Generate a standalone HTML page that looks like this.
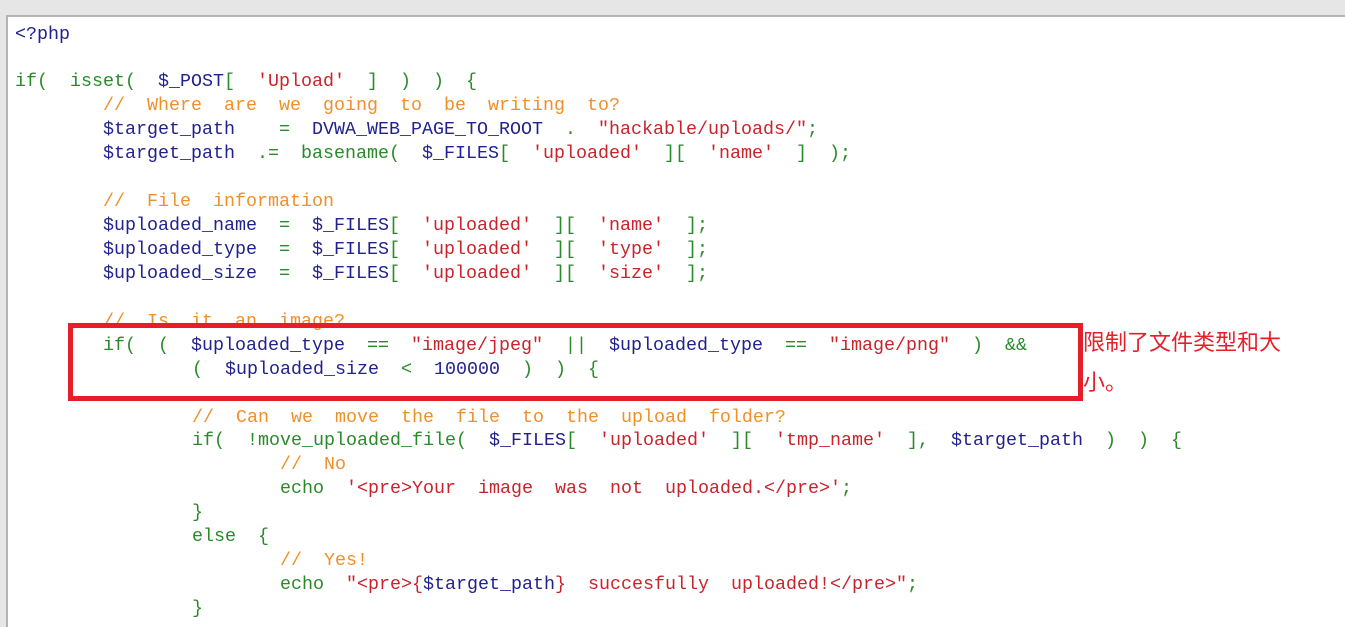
<!DOCTYPE html>
<html><head><meta charset="utf-8"><style>
html,body{margin:0;padding:0;}
body{width:1345px;height:612px;background:#e6e6e6;position:relative;overflow:hidden;}
.panel{position:absolute;left:6px;top:15px;width:1345px;height:610px;background:#fff;border-left:2px solid #b4b4b4;border-top:2px solid #b4b4b4;}
.l{position:absolute;height:24px;line-height:24px;white-space:pre;font-family:"Liberation Mono",monospace;font-size:18.33px;color:#22228f;}
.g{color:#2a8a2a}.b{color:#22228f}.r{color:#c8242c}.o{color:#f0902a}
.box{position:absolute;left:68px;top:323px;width:1005px;height:68px;border:5px solid #e41f2a;}
.cn{position:absolute;left:1083px;top:321px;font-family:"Noto Sans CJK SC",sans-serif;font-size:22px;line-height:40px;color:#e41f2a;width:220px;}
</style></head><body>
<div class="panel"></div>
<div class="l b" style="left:15px;top:23px">&lt;?php</div>
<div class="l" style="left:15px;top:70px"><span class="g">if(  isset(  </span><span class="b">$_POST</span><span class="g">[  </span><span class="r">'Upload'</span><span class="g">  ]  )  )  {</span></div>
<div class="l o" style="left:103px;top:94px">//  Where  are  we  going  to  be  writing  to?</div>
<div class="l" style="left:103px;top:118px"><span class="b">$target_path</span><span class="g">    =  </span><span class="b">DVWA_WEB_PAGE_TO_ROOT</span><span class="g">  .  </span><span class="r">"hackable/uploads/"</span><span class="g">;</span></div>
<div class="l" style="left:103px;top:142px"><span class="b">$target_path</span><span class="g">  .=  basename(  </span><span class="b">$_FILES</span><span class="g">[  </span><span class="r">'uploaded'</span><span class="g">  ][  </span><span class="r">'name'</span><span class="g">  ]  );</span></div>
<div class="l o" style="left:103px;top:190px">//  File  information</div>
<div class="l" style="left:103px;top:214px"><span class="b">$uploaded_name</span><span class="g">  =  </span><span class="b">$_FILES</span><span class="g">[  </span><span class="r">'uploaded'</span><span class="g">  ][  </span><span class="r">'name'</span><span class="g">  ];</span></div>
<div class="l" style="left:103px;top:238px"><span class="b">$uploaded_type</span><span class="g">  =  </span><span class="b">$_FILES</span><span class="g">[  </span><span class="r">'uploaded'</span><span class="g">  ][  </span><span class="r">'type'</span><span class="g">  ];</span></div>
<div class="l" style="left:103px;top:262px"><span class="b">$uploaded_size</span><span class="g">  =  </span><span class="b">$_FILES</span><span class="g">[  </span><span class="r">'uploaded'</span><span class="g">  ][  </span><span class="r">'size'</span><span class="g">  ];</span></div>
<div class="l o" style="left:103px;top:310px">//  Is  it  an  image?</div>
<div class="l" style="left:103px;top:334px"><span class="g">if(  (  </span><span class="b">$uploaded_type</span><span class="g">  ==  </span><span class="r">"image/jpeg"</span><span class="g">  ||  </span><span class="b">$uploaded_type</span><span class="g">  ==  </span><span class="r">"image/png"</span><span class="g">  )  &amp;&amp;</span></div>
<div class="l" style="left:192px;top:358px"><span class="g">(  </span><span class="b">$uploaded_size</span><span class="g">  &lt;  </span><span class="b">100000</span><span class="g">  )  )  {</span></div>
<div class="box"></div>
<div class="cn">限制了文件类型和大小。</div>
<div class="l o" style="left:192px;top:406px">//  Can  we  move  the  file  to  the  upload  folder?</div>
<div class="l" style="left:192px;top:429px"><span class="g">if(  !move_uploaded_file(  </span><span class="b">$_FILES</span><span class="g">[  </span><span class="r">'uploaded'</span><span class="g">  ][  </span><span class="r">'tmp_name'</span><span class="g">  ],  </span><span class="b">$target_path</span><span class="g">  )  )  {</span></div>
<div class="l o" style="left:280px;top:453px">//  No</div>
<div class="l" style="left:280px;top:477px"><span class="g">echo  </span><span class="r">'&lt;pre&gt;Your  image  was  not  uploaded.&lt;/pre&gt;'</span><span class="g">;</span></div>
<div class="l g" style="left:192px;top:501px">}</div>
<div class="l g" style="left:192px;top:525px">else  {</div>
<div class="l o" style="left:280px;top:549px">//  Yes!</div>
<div class="l" style="left:280px;top:573px"><span class="g">echo  </span><span class="r">"&lt;pre&gt;{</span><span class="b">$target_path</span><span class="r">}  succesfully  uploaded!&lt;/pre&gt;"</span><span class="g">;</span></div>
<div class="l g" style="left:192px;top:597px">}</div>
</body></html>
